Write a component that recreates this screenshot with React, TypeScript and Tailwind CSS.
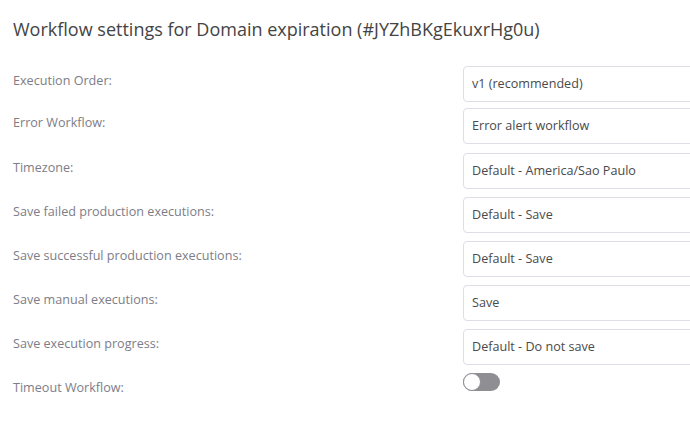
const rows: { label: string; value?: string; h: string }[] = [
  { label: "Execution Order:", value: "v1 (recommended)", h: "h-[42px]" },
  { label: "Error Workflow:", value: "Error alert workflow", h: "h-[45px]" },
  { label: "Timezone:", value: "Default - America/Sao Paulo", h: "h-[44px]" },
  { label: "Save failed production executions:", value: "Default - Save", h: "h-[44px]" },
  { label: "Save successful production executions:", value: "Default - Save", h: "h-[44px]" },
  { label: "Save manual executions:", value: "Save", h: "h-[44px]" },
  { label: "Save execution progress:", value: "Default - Do not save", h: "h-[44px]" },
];

function Toggle() {
  return (
    <div className="relative h-[18px] w-[37px] rounded-full bg-[#8e8e93]">
      <div className="absolute left-0 top-0 h-[18px] w-[18px] rounded-full border border-[#8e8e93] bg-white" />
    </div>
  );
}

export default function App() {
  return (
    <div
      className="h-[438px] w-[690px] overflow-hidden bg-white pl-[13px] pt-[16px]"
      style={{ fontFamily: '"Open Sans", "Liberation Sans", sans-serif' }}
    >
      <h1 className="text-[18px] leading-[26px] text-[#444]">
        Workflow settings for Domain expiration (#JYZhBKgEkuxrHg0u)
      </h1>
      <div className="mt-[24px] flex flex-col">
        {rows.map((row) => (
          <div key={row.label} className={`flex ${row.h}`}>
            <div className="w-[450px] shrink-0 pt-[6px] text-[12.6px] leading-[18px] text-[#7d7d87]">
              {row.label}
            </div>
            <div className="flex h-[36px] w-[260px] shrink-0 items-center rounded-[4px] border border-[#dcdfe6] pl-[8px] pt-[1px] text-[12.6px] text-[#4a4a4a]">
              {row.value}
            </div>
          </div>
        ))}
        <div className="flex h-[44px]">
          <div className="w-[450px] shrink-0 pt-[6px] text-[12.6px] leading-[18px] text-[#7d7d87]">
            Timeout Workflow:
          </div>
          <Toggle />
        </div>
      </div>
    </div>
  );
}
